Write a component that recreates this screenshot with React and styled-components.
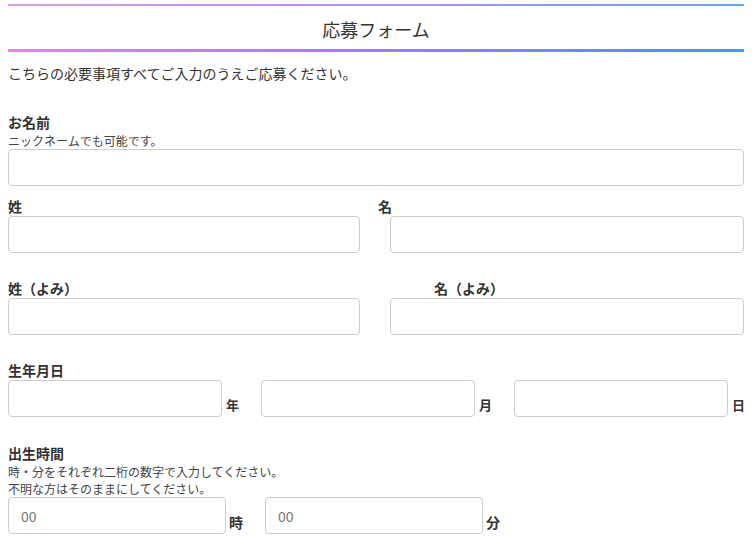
import React from "react";
import styled, { createGlobalStyle } from "styled-components";

const GlobalStyle = createGlobalStyle`
  body {
    margin: 0;
    background: #fff;
    font-family: "Noto Sans CJK JP", "Noto Sans", sans-serif;
    color: #333;
  }
`;

const gradient = "linear-gradient(to right, #dc88e6, #a37bf1 45%, #4c95e6)";

const Page = styled.div`
  width: 736px;
  padding: 4px 12px 0 8px;
`;

const Header = styled.header`
  position: relative;
  padding: 10px 0 7px;
  margin-top: 2px;
  text-align: center;

  &::before,
  &::after {
    content: "";
    position: absolute;
    left: 0;
    right: 0;
    background: ${gradient};
  }
  &::before {
    top: -2px;
    height: 2px;
    opacity: 0.85;
  }
  &::after {
    bottom: -3px;
    height: 3px;
  }
`;

const Title = styled.h1`
  margin: 0;
  font-size: 18px;
  line-height: 26px;
  font-weight: 400;
  color: #333;
`;

const Intro = styled.p`
  margin: 14px 0 0;
  font-size: 14px;
  line-height: 20px;
  color: #333;
`;

const Section = styled.div`
  margin-top: ${(p) => p.$gap}px;
`;

const Label = styled.div`
  font-size: 14px;
  line-height: 20px;
  font-weight: 700;
  color: #333;
  margin-left: ${(p) => p.$indent || 0}px;
`;

const Note = styled.div`
  font-size: 12px;
  line-height: 17px;
  color: #444;
`;

const Input = styled.input`
  display: block;
  box-sizing: border-box;
  width: ${(p) => p.$width || "100%"};
  height: 37px;
  margin: 0;
  margin-left: ${(p) => p.$offset || 0}px;
  padding: 0 12px;
  border: 1px solid #ccc;
  border-radius: 4px;
  background: #fff;
  font-family: inherit;
  font-size: 14px;
  color: #333;
  outline: none;

  &::placeholder {
    color: #777;
  }
`;

const SplitRow = styled.div`
  display: flex;
  justify-content: space-between;
`;

const Column = styled.div`
  width: ${(p) => p.$width}px;
`;

const UnitRow = styled.div`
  display: flex;
  gap: ${(p) => p.$gap}px;
`;

const UnitGroup = styled.div`
  display: flex;
  align-items: flex-end;
  gap: ${(p) => p.$gap}px;
`;

const Unit = styled.span`
  font-size: ${(p) => p.$size}px;
  line-height: 24px;
  font-weight: 700;
  color: #333;
`;

const NamePair = ({ left, right, rightIndent }) => (
  <SplitRow>
    <Column $width={352}>
      <Label>{left}</Label>
      <Input type="text" />
    </Column>
    <Column $width={366}>
      <Label $indent={rightIndent}>{right}</Label>
      <Input type="text" $offset={12} $width="354px" />
    </Column>
  </SplitRow>
);

export default function App() {
  return (
    <>
      <GlobalStyle />
      <Page>
        <Header>
          <Title>応募フォーム</Title>
        </Header>
        <Intro>こちらの必要事項すべてご入力のうえご応募ください。</Intro>

        <Section $gap={29}>
          <Label>お名前</Label>
          <Note>ニックネームでも可能です。</Note>
          <Input type="text" />
        </Section>

        <Section $gap={10}>
          <NamePair left="姓" right="名" rightIndent={0} />
        </Section>

        <Section $gap={25}>
          <NamePair left="姓（よみ）" right="名（よみ）" rightIndent={56} />
        </Section>

        <Section $gap={25}>
          <Label>生年月日</Label>
          <UnitRow $gap={22}>
            {["年", "月", "日"].map((u) => (
              <UnitGroup key={u} $gap={4}>
                <Input type="text" $width="214px" />
                <Unit $size={13}>{u}</Unit>
              </UnitGroup>
            ))}
          </UnitRow>
        </Section>

        <Section $gap={26}>
          <Label>出生時間</Label>
          <Note>時・分をそれぞれ二桁の数字で入力してください。</Note>
          <Note>不明な方はそのままにしてください。</Note>
          <UnitRow $gap={22}>
            {["時", "分"].map((u) => (
              <UnitGroup key={u} $gap={3}>
                <Input type="text" placeholder="00" $width="218px" />
                <Unit $size={14}>{u}</Unit>
              </UnitGroup>
            ))}
          </UnitRow>
        </Section>
      </Page>
    </>
  );
}
